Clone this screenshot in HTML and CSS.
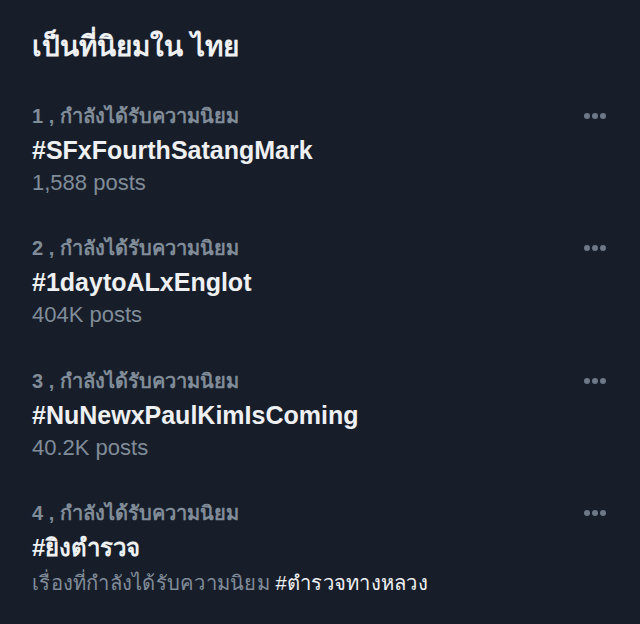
FILE: index.html
```html
<!DOCTYPE html>
<html lang="th">

<head>
    <meta charset="UTF-8">
    <meta name="viewport" content="width=device-width, initial-scale=1.0">
    <title>เป็นที่นิยมใน ไทย</title>
    <link rel="stylesheet" href="styles.css">
</head>

<body>
    <div class="panel">
        <h2 class="title">เป็นที่นิยมใน ไทย</h2>

        <div class="trend">
            <div class="trend-head">
                <span class="meta">1 , กำลังได้รับความนิยม</span>
                <span class="more"><i></i><i></i><i></i></span>
            </div>
            <div class="name">#SFxFourthSatangMark</div>
            <div class="count">1,588 posts</div>
        </div>

        <div class="trend">
            <div class="trend-head">
                <span class="meta">2 , กำลังได้รับความนิยม</span>
                <span class="more"><i></i><i></i><i></i></span>
            </div>
            <div class="name">#1daytoALxEnglot</div>
            <div class="count">404K posts</div>
        </div>

        <div class="trend">
            <div class="trend-head">
                <span class="meta">3 , กำลังได้รับความนิยม</span>
                <span class="more"><i></i><i></i><i></i></span>
            </div>
            <div class="name">#NuNewxPaulKimIsComing</div>
            <div class="count">40.2K posts</div>
        </div>

        <div class="trend">
            <div class="trend-head">
                <span class="meta">4 , กำลังได้รับความนิยม</span>
                <span class="more"><i></i><i></i><i></i></span>
            </div>
            <div class="name name-th">#ยิงตำรวจ</div>
            <div class="count count-th">เรื่องที่กำลังได้รับความนิยม <b>#ตำรวจทางหลวง</b></div>
        </div>
    </div>
</body>

</html>
```

FILE: styles.css
```css
* {
    padding: 0;
    margin: 0;
    box-sizing: border-box;
}

html,
body {
    background: #171e2a;
}

body {
    width: 640px;
    height: 624px;
    overflow: hidden;
    font-family: "Liberation Sans", "Noto Sans", sans-serif;
    color: #eef0f2;
}

.panel {
    padding: 28px 32px 0 32px;
}

.title {
    font-size: 28px;
    font-weight: 700;
    line-height: 38px;
    margin-bottom: 35px;
}

.trend {
    height: 132.3px;
}

.trend-head {
    display: flex;
    justify-content: space-between;
    align-items: center;
    height: 30px;
}

.meta {
    font-size: 20px;
    font-weight: 700;
    color: #818c99;
}

.more {
    display: flex;
    gap: 2px;
    margin-right: 2px;
}

.more i {
    width: 6px;
    height: 6px;
    border-radius: 50%;
    background: #6d7785;
}

.name {
    font-size: 25px;
    font-weight: 700;
    line-height: 38px;
}

.name-th {
    font-size: 24px;
    line-height: 40px;
}

.count {
    font-size: 22px;
    line-height: 28px;
    color: #818c99;
}

.count-th {
    font-size: 20.2px;
    letter-spacing: 0.25px;
    line-height: 30px;
}

.count b {
    color: #eef0f2;
    font-weight: 400;
}
```
